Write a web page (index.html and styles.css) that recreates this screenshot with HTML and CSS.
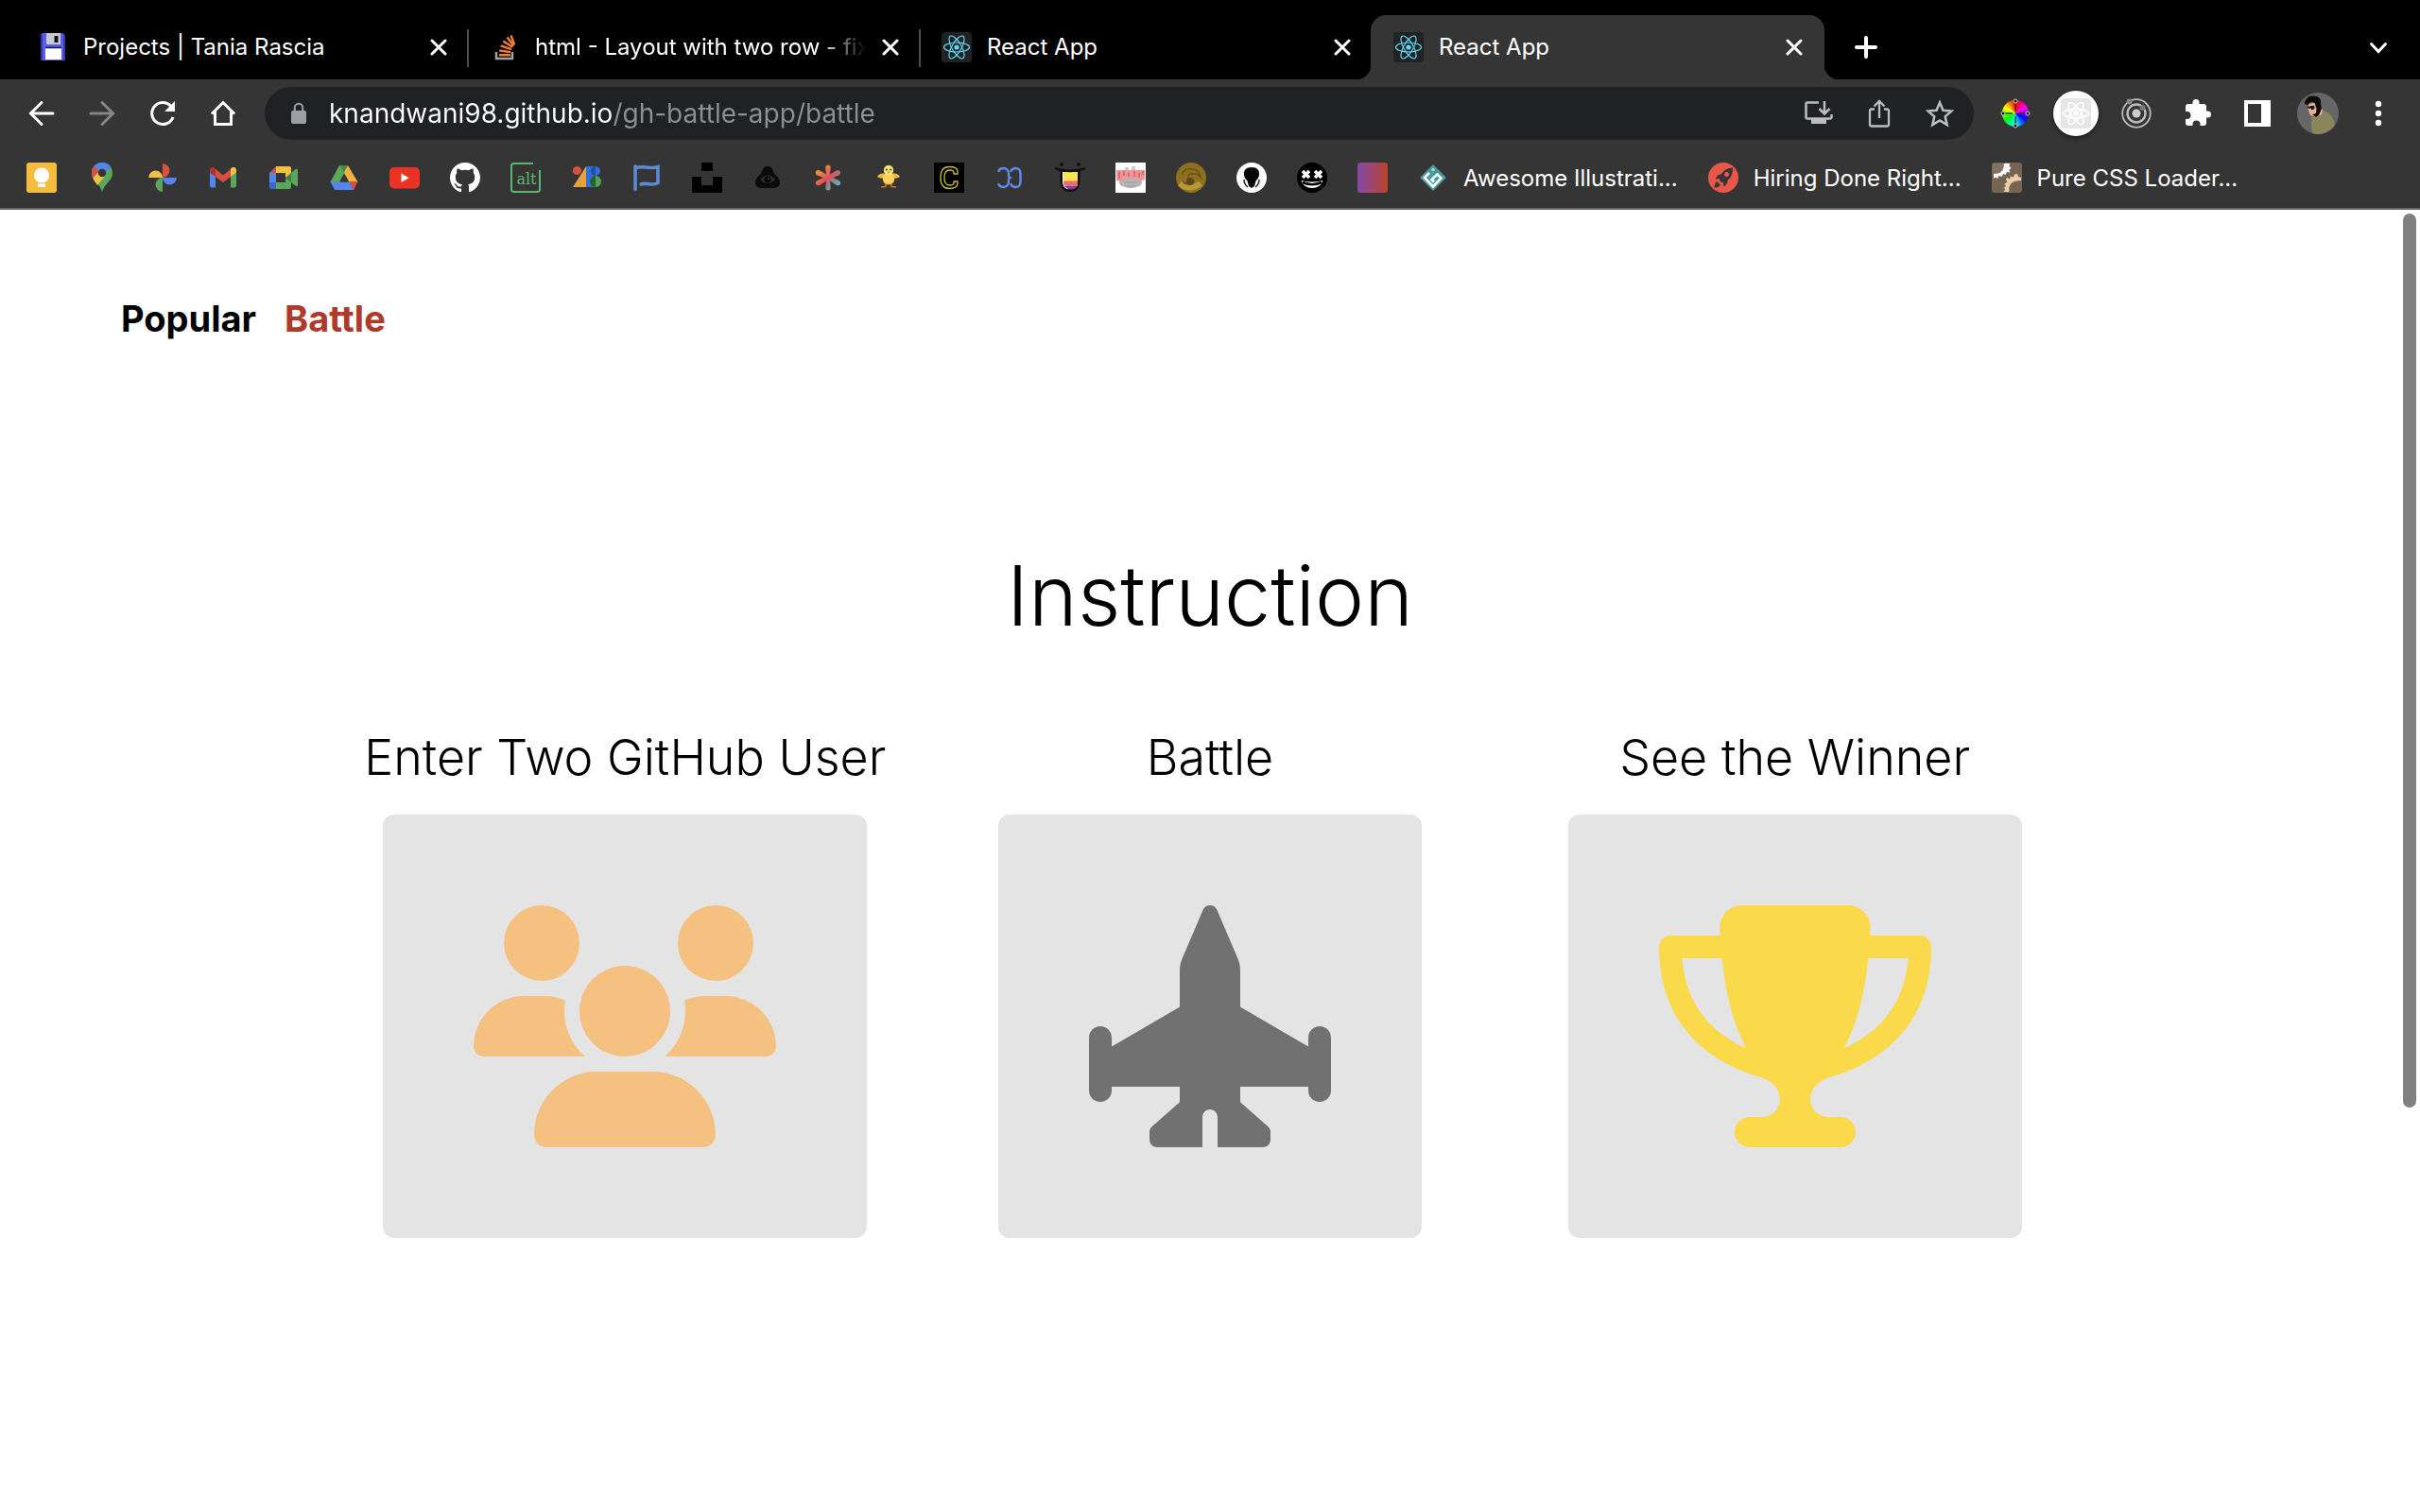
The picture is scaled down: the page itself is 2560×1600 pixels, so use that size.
FILE: index.html
```html
<!DOCTYPE html>
<html lang="en">
<head>
<meta charset="utf-8">
<meta name="viewport" content="width=device-width, initial-scale=1">
<title>React App</title>
<link rel="stylesheet" href="styles.css">
</head>
<body>
<svg class="defs" aria-hidden="true">
  <defs>
    <symbol id="close" viewBox="0 0 18 18"><path d="M2 2l14 14M16 2L2 16" stroke="currentColor" stroke-width="3" stroke-linecap="round"/></symbol>
    <symbol id="atom" viewBox="0 0 32 32">
      <rect width="32" height="32" rx="4" fill="#222"/>
      <g fill="none" stroke="#61dafb" stroke-width="1.200"><ellipse cx="16" cy="16" rx="13.500" ry="5"/><ellipse cx="16" cy="16" rx="13.500" ry="5" transform="rotate(60 16 16)"/><ellipse cx="16" cy="16" rx="13.500" ry="5" transform="rotate(120 16 16)"/></g>
      <circle cx="16" cy="16" r="2.600" fill="#61dafb"/>
    </symbol>
    <linearGradient id="aster" x1="0" y1="0" x2="1" y2="1"><stop offset="0.1" stop-color="#f0a030"/><stop offset="0.5" stop-color="#e0505a"/><stop offset="0.85" stop-color="#4fb5c0"/></linearGradient>
    <linearGradient id="sunset"><stop offset="0" stop-color="#8549a8"/><stop offset="1" stop-color="#b8442c"/></linearGradient>
  </defs>
</svg>

<header class="browser">
  <div class="tabstrip">
    <div class="tab">
      <svg class="icon" viewBox="0 0 32 32"><path d="M3 3l2-2h21l3 3v26H3z" fill="#5a5be8"/><path d="M3 3h2v27H3zM27 4h2v26h-2z" fill="#3437b8"/><rect x="9" y="1" width="15" height="12" fill="#c9c9d4"/><rect x="17.500" y="4" width="4" height="7" fill="#111"/><rect x="8" y="17" width="17" height="12" fill="#fff"/><path d="M8 16.500h17" stroke="#16164a" stroke-width="1.500"/></svg>
      <span class="tab-title">Projects | Tania Rascia</span>
      <button class="close" aria-label="Close tab"><svg class="x"><use href="#close"/></svg></button>
    </div>
    <div class="tab">
      <svg class="icon" viewBox="0 0 32 32"><path d="M7 21v7h17v-7" fill="none" stroke="#9da3ab" stroke-width="2.500"/><g stroke="#ee7f34" stroke-width="2.400"><path d="M10 24.300h12M10.300 19.500l11.900 1.600M11.700 14.300l11.300 3.800M14.300 9.500l9.800 6.300M18.500 5.500l7 9M22.500 3.500l3.600 9.500"/></g></svg>
      <span class="tab-title fade">html - Layout with two row - fix</span>
      <button class="close" aria-label="Close tab"><svg class="x"><use href="#close"/></svg></button>
    </div>
    <div class="tab">
      <svg class="icon"><use href="#atom"/></svg>
      <span class="tab-title">React App</span>
      <button class="close" aria-label="Close tab"><svg class="x"><use href="#close"/></svg></button>
    </div>
    <div class="tab active">
      <svg class="icon"><use href="#atom"/></svg>
      <span class="tab-title">React App</span>
      <button class="close" aria-label="Close tab"><svg class="x"><use href="#close"/></svg></button>
    </div>
    <button class="new-tab" aria-label="New tab"><svg class="icon" viewBox="0 0 32 32"><path d="M16 6v20M6 16h20" stroke="#fff" stroke-width="4" stroke-linecap="round"/></svg></button>
    <button class="tab-search" aria-label="Search tabs"><svg class="icon" viewBox="0 0 32 32"><path d="M8.500 12.500l7.500 8 7.500-8" fill="none" stroke="#fff" stroke-width="3" stroke-linecap="round"/></svg></button>
  </div>

  <div class="toolbar">
    <div class="nav-buttons">
      <button aria-label="Back"><svg class="icon" viewBox="0 0 32 32"><path d="M28 16H5M16 4.500L4.500 16 16 27.500" fill="none" stroke="#fff" stroke-width="3" stroke-linecap="round"/></svg></button>
      <button aria-label="Forward"><svg class="icon" viewBox="0 0 32 32"><path d="M4 16h23M16 4.500L27.500 16 16 27.500" fill="none" stroke="#868686" stroke-width="3" stroke-linecap="round"/></svg></button>
      <button aria-label="Reload"><svg class="icon" viewBox="0 0 32 32"><path d="M27 20a11.500 11.500 0 1 1-2.500-12" fill="none" stroke="#fff" stroke-width="3"/><path d="M29 3v11H18z" fill="#fff"/></svg></button>
      <button aria-label="Home"><svg class="icon" viewBox="0 0 32 32"><path d="M4 16.500L16 4.500l12 12M7.500 14v13.500h17V14" fill="none" stroke="#fff" stroke-width="3"/></svg></button>
    </div>
    <div class="omnibox">
      <svg class="icon" viewBox="0 0 32 32"><rect x="8" y="13" width="16" height="14" rx="2" fill="#9aa0a6"/><path d="M11.800 14v-4a4.200 4.200 0 0 1 8.400 0v4" fill="none" stroke="#9aa0a6" stroke-width="2"/></svg>
      <input class="url" type="text" aria-label="Address" value="knandwani98.github.io/gh-battle-app/battle">
      <button aria-label="Install app"><svg class="icon" viewBox="0 0 32 32"><path d="M16 4.500H4a1.500 1.500 0 0 0-1.500 1.500v14A1.500 1.500 0 0 0 4 21.500h24a1.500 1.500 0 0 0 1.500-1.500v-3" fill="none" stroke="#bdbdbd" stroke-width="2.500"/><path d="M8 22h16v5H8z" fill="#bdbdbd"/><path d="M22 3v13M16.500 11l5.500 5.500 5.500-5.500" fill="none" stroke="#bdbdbd" stroke-width="2.500"/></svg></button>
      <button aria-label="Share"><svg class="icon" viewBox="0 0 32 32"><path d="M11 11.500H8A2 2 0 0 0 6 13.500v14a2 2 0 0 0 2 2h16a2 2 0 0 0 2-2v-14a2 2 0 0 0-2-2h-3M16 21V4M10.500 8.500L16 3l5.500 5.500" fill="none" stroke="#bdbdbd" stroke-width="2.300"/></svg></button>
      <button aria-label="Bookmark this tab"><svg class="icon" viewBox="0 0 32 32"><path d="M16 4.500l3.500 8.200 8.900.8-6.700 5.900 2 8.700L16 23.500l-7.700 4.600 2-8.700-6.700-5.900 8.900-.8z" fill="none" stroke="#bdbdbd" stroke-width="2.500"/></svg></button>
    </div>
    <div class="extensions">
      <button class="wheel-button" aria-label="Color picker"><span class="wheel"></span><svg class="icon wheel-marks" viewBox="0 0 32 32"><path d="M16 5v8M16 19v8M5 16h8M19 16h8" stroke="#333" stroke-width="1.500"/><g fill="#111" stroke="#ccc"><circle cx="16" cy="3" r="2"/><circle cx="16" cy="29" r="2"/><circle cx="3" cy="16" r="2"/><circle cx="29" cy="16" r="2"/></g></svg></button>
      <button class="bubble" aria-label="React Developer Tools"><svg class="icon" viewBox="0 0 32 32"><rect width="32" height="32" rx="3" fill="#e6e6e6"/><g fill="none" stroke="#fff" stroke-width="1.600"><ellipse cx="16" cy="16" rx="13" ry="5"/><ellipse cx="16" cy="16" rx="13" ry="5" transform="rotate(60 16 16)"/><ellipse cx="16" cy="16" rx="13" ry="5" transform="rotate(120 16 16)"/></g><circle cx="16" cy="16" r="3" fill="#fff"/></svg></button>
      <button aria-label="Orbit"><svg class="icon" viewBox="0 0 32 32"><g fill="none" stroke="#bbb" stroke-width="1.800"><circle cx="16" cy="16" r="14.800"/><circle cx="16" cy="16" r="9.500" stroke-width="2.500"/></g><circle cx="16" cy="16" r="4.500" fill="#ccc"/><circle cx="8.500" cy="3.500" r="3" fill="#888"/><circle cx="22.500" cy="10" r="3" fill="#777"/></svg></button>
      <button aria-label="Extensions"><svg class="icon" viewBox="0 0 32 32"><path d="M4 9q0-3 3-3h4.500V4.500a3.500 3.500 0 0 1 7 0V6H23q3 0 3 3v4.500h1.500a3.500 3.500 0 0 1 0 7H26V26q0 3-3 3h-3.500v-1.500a4 4 0 0 0-8 0V29H7q-3 0-3-3v-4h1.500a4 4 0 0 0 0-8H4z" fill="#fff"/></svg></button>
      <button aria-label="Side panel"><svg class="icon" viewBox="0 0 32 32"><path fill-rule="evenodd" d="M2 2h28v28H2zM6 6v20h14V6z" fill="#fff"/></svg></button>
      <button class="avatar" aria-label="Profile"><svg viewBox="0 0 44 44"><defs><clipPath id="face"><circle cx="22" cy="22" r="22"/></clipPath></defs><g clip-path="url(#face)"><rect width="44" height="44" fill="#666"/><path d="M16 44q-2-14 0-19 6 1 12-6 10 3 12 15 0 5-5 10z" fill="#8a855c"/><path d="M13 12l8-2 6 8-1 5-5 3-7-2-3-8z" fill="#eab09a"/><path d="M8 12C8 6 13 3 17 3.500c6 0 9 3 8 8.500l1 5-3 7-3 2-4-3 4-1 .5-5-2-6Q14 8 11 13z" fill="#0c0c0c"/><path d="M11 15l7-1.500.500 3.500-3 1.500-1-2-3 .5z" fill="#151515"/></g></svg></button>
      <button aria-label="Menu"><svg class="icon" viewBox="0 0 32 32"><g fill="#fff"><circle cx="16" cy="6" r="3.200"/><circle cx="16" cy="16" r="3.200"/><circle cx="16" cy="26" r="3.200"/></g></svg></button>
    </div>
  </div>

  <nav class="bookmarks" aria-label="Bookmarks">
    <a href="#" aria-label="Keep"><svg class="icon" viewBox="0 0 32 32"><rect width="32" height="32" rx="3" fill="#f5bc3e"/><circle cx="16" cy="13.500" r="8" fill="#fff"/><path d="M12 18h8v3h-8zM12 22.500h8V26h-8z" fill="#fff"/></svg></a>
    <a href="#" aria-label="Maps"><svg class="icon" viewBox="0 0 32 32"><path d="M16 0C9 0 5 5 5 11c0 9 9 11 11 20.500C18 22 27 20 27 11 27 5 23 0 16 0z" fill="#5aa75c"/><path d="M16 0c4.500 0 7.500 2 9.500 5L8.500 20.500C6.500 17.500 5 15 5 11 5 5 9 0 16 0z" fill="#5484ec"/><path d="M7.500 4L13 9l-6.500 7C5.500 14.500 5 13 5 11c0-3 1-5 2.500-7z" fill="#d8503f"/><path d="M12.500 9.500L19.500 14l-8.500 10q-3-3.500-4.700-7.500z" fill="#f3c044"/><circle cx="16" cy="11" r="4.200" fill="#353535"/></svg></a>
    <a href="#" aria-label="Photos"><svg class="icon" viewBox="0 0 32 32"><path d="M16 1.200a7.400 7.400 0 0 1 0 14.800z" fill="#d8503f"/><path d="M30.800 16a7.400 7.400 0 0 1-14.800 0z" fill="#5484ec"/><path d="M16 30.800a7.400 7.400 0 0 1 0-14.800z" fill="#5aa75c"/><path d="M1.200 16a7.400 7.400 0 0 1 14.800 0z" fill="#f3c044"/></svg></a>
    <a href="#" aria-label="Gmail"><svg class="icon" viewBox="0 0 32 32"><path d="M2 10l6 4.500V26.500H4a2 2 0 0 1-2-2z" fill="#5484ec"/><path d="M30 10l-6 4.500V26.500h4a2 2 0 0 0 2-2z" fill="#5aa75c"/><path d="M8 7l8 6.500L24 7v8l-8 6-8-6z" fill="#d8503f"/><path d="M2 8c0-3 3-4 6-1.500V15l-6-4.500z" fill="#b3312c"/><path d="M30 8c0-3-3-4-6-1.500V15l6-4.500z" fill="#f3c044"/></svg></a>
    <a href="#" aria-label="Meet"><svg class="icon" viewBox="0 0 32 32"><path d="M1 11h7v10H1z" fill="#5484ec"/><path d="M1 21h7v7H3a2 2 0 0 1-2-2z" fill="#3c67c8"/><path d="M1 11l7-7v7z" fill="#d8503f"/><path d="M8 4h14a2 2 0 0 1 2 2v7l-6 3v-5H8z" fill="#f3c044"/><path d="M8 21h10v-5l6 4v6a2 2 0 0 1-2 2H8z" fill="#5aa75c"/><path d="M18 16l6-5v10z" fill="#3c7d40"/><path d="M24 11l4.500-4Q31 6 31 8.500v15q0 2.500-2.500 1L24 21z" fill="#5aa75c"/></svg></a>
    <a href="#" aria-label="Drive"><svg class="icon" viewBox="0 0 32 32"><path d="M11 3h5l4 7-13.500 19L1.500 20.500z" fill="#5aa75c"/><path d="M11.500 3H20l-4 8z" fill="#43884a"/><path d="M20 3l10.500 17.500H21L16 10.500z" fill="#f1b23e"/><path d="M1.500 20.500H22L26 29H6.500z" fill="#5484ec"/><path d="M21.500 20.500h9L26 29z" fill="#d8503f"/><path d="M16 11.500l5 9H11z" fill="#353535"/></svg></a>
    <a href="#" aria-label="YouTube"><svg class="icon" viewBox="0 0 32 32"><rect y="5" width="32" height="22.500" rx="5" fill="#ea3323"/><path d="M12.500 11.500v9.500l8-4.750z" fill="#fff"/></svg></a>
    <a href="#" aria-label="GitHub"><svg class="icon" viewBox="0 0 16 16"><path fill="#fff" d="M8 0C3.580 0 0 3.580 0 8c0 3.540 2.290 6.530 5.470 7.590.4.070.55-.17.55-.38 0-.19-.01-.82-.01-1.490-2.010.37-2.530-.49-2.690-.94-.09-.23-.48-.94-.82-1.130-.28-.15-.68-.52-.01-.53.63-.01 1.080.58 1.230.82.72 1.210 1.870.87 2.330.66.07-.52.28-.87.51-1.070-1.780-.2-3.640-.89-3.640-3.950 0-.87.31-1.590.82-2.150-.08-.2-.36-1.020.08-2.120 0 0 .67-.21 2.200.82.64-.18 1.320-.27 2-.27s1.360.09 2 .27c1.530-1.040 2.200-.82 2.200-.82.44 1.100.16 1.920.08 2.120.51.56.82 1.270.82 2.150 0 3.070-1.870 3.750-3.650 3.950.29.25.54.73.54 1.480 0 1.070-.01 1.930-.01 2.200 0 .21.15.46.55.38A8.010 8.010 0 0 0 16 8c0-4.420-3.580-8-8-8z"/></svg></a>
    <a href="#" aria-label="alt"><svg class="icon" viewBox="0 0 32 32"><path d="M24 1H4a3 3 0 0 0-3 3v24a3 3 0 0 0 3 3h24a3 3 0 0 0 3-3V8" fill="none" stroke="#5cb870" stroke-width="2"/><text x="17" y="23" text-anchor="middle" class="alt-mark" fill="#5cb870">alt</text></svg></a>
    <a href="#" aria-label="Zero to mastery"><svg class="icon" viewBox="0 0 32 32"><circle cx="6.500" cy="8.500" r="4.500" fill="#d8503f"/><path d="M16 4v22H2z" fill="#e8a23a"/><path d="M16 4h10v22H16z" fill="#2f6fe0"/><path d="M26 4a5 5 0 0 1 0 10z" fill="#2f6fe0"/><path d="M26 4a5 5 0 0 0 0 10z" fill="#244fa5"/><circle cx="26" cy="20" r="6" fill="#4fa358"/><path d="M26 14a6 6 0 0 0 0 12z" fill="#28602f"/></svg></a>
    <a href="#" aria-label="Flag"><svg class="icon" viewBox="0 0 32 32"><path d="M4 28.500V4M4 6c8-4 13 2 24-1.500v17c-7 4-11-1-18 1.500" fill="none" stroke="#5d8ad4" stroke-width="3.600" stroke-linecap="round"/></svg></a>
    <a href="#" aria-label="Unsplash"><svg class="icon" viewBox="0 0 32 32"><path d="M10 0h12v9H10zM0 15h10v9h12v-9h10v17H0z"/></svg></a>
    <a href="#" aria-label="Eye"><svg class="icon" viewBox="0 0 32 32"><path d="M16 4c5 0 6 5 7 8 4 3 6 5 6 11-2 5-10 4-13 4S5 28 3 23c0-6 2-8 6-11 1-3 2-8 7-8z" fill="#0b0b0b"/><path d="M8 18q8-9 16 0-8 8-16 0z" fill="#2e2e2e"/><circle cx="16" cy="18" r="3.500" fill="#060606"/><circle cx="17" cy="17" r="1" fill="#444"/></svg></a>
    <a href="#" aria-label="Asterisk"><svg class="icon" viewBox="0 0 32 32"><path d="M16 2.500q3 0 2.700 3l-.7 7 6.500-4q3-1.200 4.200 1 1 2.500-1.500 4L21 16l6.500 3q2.500 1.500 1.500 4-1.500 2-4.200 1l-6.800-4.500.7 7q0 3-2.700 3t-2.700-3l.7-7L7.200 24q-2.700 1-4.200-1-1-2.500 1.500-4L11 16l-6.500-2.500Q2 12 3 9.500q1.500-2.200 4.200-1l6.800 4-.7-7q-.3-3 2.700-3z" fill="url(#aster)"/></svg></a>
    <a href="#" aria-label="Chick"><svg class="icon" viewBox="0 0 32 32"><path d="M13 22v3.500l-5 .5M19 22v3.500l5 .5" stroke="#c9762a" stroke-width="1.600" fill="none"/><path d="M4 15q2-4 7-3.500h10q5-.5 7 3.500-3 2-5.500 1.500Q22 23.500 16 23.500T9.500 16.500Q7 17 4 15z" fill="#f2b93a"/><ellipse cx="16" cy="16" rx="5.500" ry="6" fill="#fad75a"/><circle cx="16" cy="8" r="5.200" fill="#fbe075"/><circle cx="13.800" cy="7.500" r="1" fill="#333"/><circle cx="18.200" cy="7.500" r="1" fill="#333"/><path d="M14.800 9.500h2.400L16 12z" fill="#e0762a"/></svg></a>
    <a href="#" aria-label="C"><svg class="icon" viewBox="0 0 32 32"><rect width="32" height="32"/><path d="M25 12V9.500C25 6 22 4.500 16 4.500S7 8 7 16s3 11.500 9 11.500 9-2 9-5.500v-2h-4v1.500c0 2-2 2.500-4.500 2.500-4 0-5.500-3-5.500-8s1.500-8 5.500-8c2.500 0 4.500.7 4.500 3v1z" fill="none" stroke="#c9bb3e" stroke-width="1.300"/></svg></a>
    <a href="#" aria-label="Links"><svg class="icon" viewBox="0 0 32 32"><path d="M4.500 9c1-2.500 3-3 5-3 3.500 0 5.500 2.500 5.500 6 0 2-.5 3 1.500 4-2 1-1.500 2-1.500 4 0 3.500-2 6-5.500 6-2 0-4-.5-5-3M17.500 9c1-2.500 3-3 5-3 3 0 5 2.500 5 5.500v9c0 3-2 5.500-5 5.500-2 0-4-.5-5-3" fill="none" stroke="#5d8df0" stroke-width="2.400" stroke-linecap="round"/></svg></a>
    <a href="#" aria-label="Tongue"><svg class="icon" viewBox="0 0 32 32"><path d="M5.500 8h21v13q-1 10-10.500 10T5.500 21z" fill="#111"/><path d="M9 10h15v10H9z" fill="#fbe452"/><path d="M9 19.500h15V25H9z" fill="#ee6a72"/><path d="M10 25h13.500q-2 3.500-6.500 3.500T10 25z" fill="#7d3fa0"/><path d="M8.500 10v12q1 5 5 6" stroke="#fff" fill="none"/><path d="M1 6.500q15 5 30 0" fill="none" stroke="#111" stroke-width="2.400" stroke-linecap="round"/><circle cx="7" cy="2" r="2" fill="#111"/><circle cx="25" cy="2" r="2" fill="#111"/></svg></a>
    <a href="#" aria-label="Badge"><svg class="icon" viewBox="0 0 32 32"><rect width="32" height="32" fill="#fff"/><path d="M10 5h4v4h-4zM17 4h4v5h-4z" fill="#ccc"/><ellipse cx="16" cy="21" rx="12" ry="6" fill="#b5b5b5"/><path d="M1 8h30v10l-6 2-3-3H10l-3 3-6-1z" fill="#ee9595"/><path d="M4 10v7M9 9v5M14 11v4M20 9v6M25 11v5M29 9v4" stroke="#e46c6e" stroke-width="2"/><path d="M10 21h12M12 25h9" stroke="#999"/></svg></a>
    <a href="#" aria-label="Coin"><svg class="icon" viewBox="0 0 32 32"><circle cx="16" cy="16" r="16" fill="#8f701f"/><path d="M4 22q10 9 22 0" fill="none" stroke="#b39a33" stroke-width="6"/><path d="M6 13q4-8 11-6 9 1 9 9-3-5-8-4-5-1-5 4 0 5 4 5-6 4-10-1" fill="none" stroke="#6b5217" stroke-width="1.500"/><circle cx="15" cy="20" r="4" fill="#5b481b"/></svg></a>
    <a href="#" aria-label="Alien"><svg class="icon" viewBox="0 0 32 32"><circle cx="16" cy="16" r="16" fill="#fff"/><path d="M16 5c6 0 8.500 3 8 8-.3 3-2 5-3.500 6.500L19 25l-3 2-3-2-1.500-5.500C10 18 8.300 16 8 13c-.5-5 2-8 8-8z" fill="#080808"/><path d="M8 18q0 5 4 8M24 18q0 5-4 8" stroke="#222" stroke-width="1.500" fill="none"/></svg></a>
    <a href="#" aria-label="Smiley"><svg class="icon" viewBox="0 0 32 32"><circle cx="16" cy="16" r="16"/><path d="M6 9l7 7M13 9l-7 7M19 9l7 7M26 9l-7 7" stroke="#fff" stroke-width="3.500"/><path d="M4.500 19q11.500 3 23 0-3 8-11.500 8T4.500 19z" fill="#fff"/><path d="M6 21q10 4.500 20 0" stroke="#000" stroke-width="2.500" fill="none"/></svg></a>
    <a href="#" aria-label="Gradients"><svg class="icon" viewBox="0 0 32 32"><rect width="32" height="32" rx="3" fill="url(#sunset)"/></svg></a>
    <a class="labelled" href="#"><svg class="icon" viewBox="0 0 32 32"><path d="M16 2l14 14-14 14L2 16z" fill="#479c9b"/><path d="M12 11l-5 5 9 9.500 8.500-9-4-4-6 5.500 2.500 2.500" fill="none" stroke="#fff" stroke-width="2.600"/><circle cx="16" cy="7.500" r="1.800" fill="#8fe0e8"/></svg>Awesome Illustrati...</a>
    <a class="labelled" href="#"><svg class="icon" viewBox="0 0 32 32"><circle cx="16" cy="16" r="16" fill="#e9574a"/><path d="M26 5.500q-8 0-12.500 7-3.500 0-6 5l4-.500q.500 3.500 4.500 4.500l.500 4q4-2.500 4-6.500 6-5 5.500-13.500z" fill="#3a3434"/><circle cx="19.500" cy="12.500" r="2.500" fill="#e9574a"/><path d="M9.500 20q-3 2-3 6.500 4 .5 6.500-2.500z" fill="#3a3434"/></svg>Hiring Done Right...</a>
    <a class="labelled" href="#"><svg class="icon" viewBox="0 0 32 32"><rect width="32" height="32" rx="3" fill="#756552"/><path d="M1 1h12q1 8-5 12H1z" fill="#84735f"/><path d="M13 1h6l-.5 3 2 2-2 1.500.5 3-3-.5-1.500 3-2.500-1-1.500 3-3-1-1.500 3-2-1.500-2 1.500v-5Q13 12.500 13 1z" fill="#fff"/><path d="M31 16l-3-1-1-3-3 .500-1 3-3-1-1 3-3-1.500-1 2 1.500 2.500-3 2 1.500 2.500-2.500 2 2 1-2 3h6q-2-12 12.500-12z" fill="#eecfa9"/></svg>Pure CSS Loader...</a>
  </nav>
</header>

<div class="page">
  <nav class="site-nav">
    <a href="#">Popular</a>
    <a class="current" href="#">Battle</a>
  </nav>
  <main class="instructions">
    <h1>Instruction</h1>
    <ol class="steps">
      <li>
        <h2>Enter Two GitHub User</h2>
        <div class="card"><svg class="users" viewBox="0 0 640 512"><path d="M144 0a80 80 0 1 1 0 160A80 80 0 1 1 144 0zM512 0a80 80 0 1 1 0 160A80 80 0 1 1 512 0zM0 298.700C0 239.800 47.800 192 106.700 192h42.700c15.900 0 31 3.500 44.600 9.700c-1.300 7.200-1.900 14.700-1.900 22.300c0 38.200 16.800 72.500 43.300 96c-.2 0-.4 0-.7 0H21.300C9.600 320 0 310.400 0 298.700zM405.300 320c-.2 0-.4 0-.7 0c26.600-23.500 43.300-57.800 43.300-96c0-7.600-.7-15-1.900-22.300c13.600-6.300 28.700-9.700 44.600-9.700h42.700C592.200 192 640 239.800 640 298.700c0 11.800-9.600 21.300-21.300 21.300H405.300zM224 224a96 96 0 1 1 192 0 96 96 0 1 1 -192 0zM128 485.300C128 411.700 187.700 352 261.300 352H378.700C452.300 352 512 411.700 512 485.300c0 14.700-11.900 26.700-26.700 26.700H154.700c-14.700 0-26.700-11.900-26.700-26.700z"/></svg></div>
      </li>
      <li>
        <h2>Battle</h2>
        <div class="card"><svg class="jet" viewBox="0 0 512 512"><path d="M270.700 9.700C268.200 3.800 262.400 0 256 0s-12.200 3.800-14.700 9.700L197.200 112.600c-3.400 8-5.200 16.500-5.200 25.200v77l-144 84V280c0-13.300-10.700-24-24-24s-24 10.700-24 24v112c0 13.300 10.700 24 24 24s24-10.700 24-24v-8H192v32.700L133.500 468c-3.500 3-5.500 7.400-5.500 12v16c0 8.800 7.200 16 16 16h96V448c0-8.800 7.200-16 16-16s16 7.200 16 16v64h96c8.800 0 16-7.200 16-16V480c0-4.600-2-9-5.500-12L320 416.700V384H464v8c0 13.300 10.700 24 24 24s24-10.700 24-24V280c0-13.300-10.700-24-24-24s-24 10.700-24 24v18.800l-144-84v-77c0-8.700-1.800-17.200-5.200-25.200L270.700 9.700z"/></svg></div>
      </li>
      <li>
        <h2>See the Winner</h2>
        <div class="card"><svg class="trophy" viewBox="0 0 576 512"><path d="M400 0H176c-26.500 0-48.100 21.800-47.100 48.200c.2 5.300 .4 10.600 .7 15.800H24C10.700 64 0 74.700 0 88c0 92.600 33.500 157 78.500 200.700c44.300 43.100 98.300 64.800 138.100 75.800c23.400 6.500 39.400 26 39.400 45.600c0 20.900-17 37.900-37.900 37.900H192c-17.700 0-32 14.300-32 32s14.300 32 32 32H384c17.700 0 32-14.300 32-32s-14.300-32-32-32H357.900C337 448 320 431 320 410.100c0-19.600 15.900-39.200 39.400-45.600c39.900-11 93.900-32.700 138.200-75.800C542.500 245 576 180.600 576 88c0-13.300-10.700-24-24-24H446.400c.3-5.200 .5-10.400 .7-15.800C448.100 21.800 426.500 0 400 0zM48.900 112h84.400c9.100 90.100 29.200 150.300 51.900 190.600c-24.900-11-50.800-26.500-73.200-48.300c-32-31.100-58-76-63-142.300zM464.100 254.300c-22.400 21.800-48.300 37.300-73.200 48.300c22.700-40.300 42.800-100.500 51.900-190.600h84.400c-5.100 66.300-31.100 111.200-63 142.300z"/></svg></div>
      </li>
    </ol>
  </main>
  <div class="scroll-thumb"></div>
</div>
</body>
</html>
```
FILE: styles.css
```css
* {
  box-sizing: border-box;
}

body {
  margin: 0;
  min-height: 100vh;
  display: flex;
  flex-direction: column;
  font-family: Inter, "Liberation Sans", sans-serif;
  background: #fff;
  color: #000;
}

button {
  display: flex;
  align-items: center;
  justify-content: center;
  margin: 0;
  padding: 0;
  border: 0;
  background: none;
  color: inherit;
  font: inherit;
}

a {
  color: inherit;
  text-decoration: none;
}

.defs {
  position: absolute;
  width: 0;
  height: 0;
}

.icon {
  display: block;
  flex: none;
  width: 32px;
  height: 32px;
}

/* Browser frame */
.browser {
  background: #353535;
  border-bottom: 2px solid #696666;
  color: #fff;
  font-size: 24px;
}

.tabstrip {
  display: flex;
  padding: 16px 28px 0 16px;
  background: #000;
}

.tab {
  position: relative;
  display: flex;
  flex: 0 1 478px;
  min-width: 0;
  height: 68px;
  align-items: center;
  gap: 16px;
  padding: 0 20px 0 24px;
}

.tab + .tab:not(.active)::before {
  content: "";
  position: absolute;
  left: 0;
  top: 15px;
  width: 2px;
  height: 40px;
  background: #4d4d4d;
}

.tab.active {
  flex-basis: 480px;
  padding-right: 22px;
  background: #353535;
  border-radius: 16px 16px 0 0;
}

.tab.active::before,
.tab.active::after {
  content: "";
  position: absolute;
  bottom: 0;
  width: 16px;
  height: 16px;
}

.tab.active::before {
  right: 100%;
  background: radial-gradient(circle at 0 0, #000 16px, #353535 17px);
}

.tab.active::after {
  left: 100%;
  background: radial-gradient(circle at 100% 0, #000 16px, #353535 17px);
}

.tab-title {
  flex: 1;
  min-width: 0;
  white-space: nowrap;
  line-height: 32px;
}

.tab-title.fade {
  mask-image: linear-gradient(to left, transparent, #000 48px);
}

.close {
  flex: none;
  width: 20px;
  height: 32px;
}

.x {
  width: 18px;
  height: 18px;
}

.new-tab {
  margin-left: 28px;
}

.tab-search {
  margin-left: auto;
}

.toolbar {
  display: flex;
  height: 72px;
  align-items: center;
  padding: 0 28px;
}

.nav-buttons,
.extensions {
  display: flex;
  flex: none;
  align-items: center;
  gap: 32px;
}

.omnibox {
  display: flex;
  flex: 1;
  min-width: 0;
  height: 56px;
  align-items: center;
  gap: 32px;
  margin: 0 28px;
  padding: 0 20px;
  border-radius: 28px;
  background: #202124;
}

.url {
  flex: 1;
  min-width: 0;
  height: 40px;
  margin-left: -16px;
  padding: 0;
  border: 0;
  outline: 0;
  font: inherit;
  font-size: 28px;
  color: #fff;
  background: linear-gradient(to right, #fff 300px, #8e8f91 300px);
  -webkit-background-clip: text;
  background-clip: text;
  -webkit-text-fill-color: transparent;
}

.wheel-button {
  position: relative;
  width: 32px;
  height: 32px;
}

.wheel {
  width: 28px;
  height: 28px;
  border-radius: 50%;
  background: conic-gradient(red, magenta, blue, cyan, lime, yellow, red);
}

.wheel-marks {
  position: absolute;
  inset: 0;
}

.bubble {
  width: 48px;
  height: 48px;
  margin: 0 -8px;
  border-radius: 50%;
  background: #fff;
  box-shadow: 0 2px 4px #1a1a1a;
}

.avatar {
  width: 44px;
  height: 44px;
  margin: 0 -6px;
}

.bookmarks {
  display: flex;
  height: 64px;
  align-items: center;
  gap: 32px;
  padding: 0 28px;
  white-space: nowrap;
}

.labelled {
  display: flex;
  align-items: center;
  gap: 16px;
}

.alt-mark {
  font: 16px "DejaVu Serif", serif;
}

/* Page */
.page {
  position: relative;
  flex: 1;
}

.site-nav {
  display: flex;
  gap: 30px;
  padding: 87px 128px 0;
  font-size: 38px;
  line-height: 56px;
  font-weight: 700;
}

.site-nav .current {
  color: #ae3a2b;
}

.instructions {
  padding-top: 201px;
  text-align: center;
}

h1,
h2 {
  margin: 0;
  font-weight: 300;
}

h1 {
  font-size: 88px;
  line-height: 128px;
}

.steps {
  display: grid;
  grid-template-columns: repeat(3, 1fr);
  width: 72.5%;
  margin: 68px auto 0;
  padding: 0;
  list-style: none;
}

.steps li {
  display: flex;
  flex-direction: column;
  align-items: center;
  gap: 20px;
}

h2 {
  font-size: 52px;
  line-height: 80px;
  white-space: nowrap;
}

.card {
  padding: 96px;
  border-radius: 12px;
  background: #e4e4e4;
}

.card svg {
  display: block;
  height: 256px;
}

.users {
  fill: #f5c181;
}

.jet {
  fill: #717171;
}

.trophy {
  fill: #fad94b;
}

.scroll-thumb {
  position: absolute;
  top: 4px;
  right: 4px;
  width: 14px;
  height: calc(69% - 5px);
  border-radius: 7px;
  background: #808080;
}
```
